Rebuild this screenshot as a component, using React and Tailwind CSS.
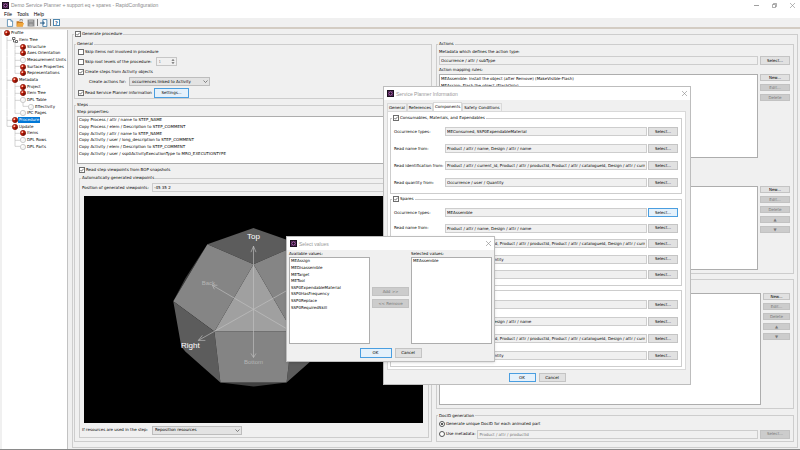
import React, { useState } from 'react';
import clsx from 'clsx';

const TREE = [
  { label: 'Profile', guides: '', on: true },
  { label: 'Item Tree', guides: '├', icon: 'tree' },
  { label: 'Structure', guides: '│├', on: true },
  { label: 'Axes Orientation', guides: '│├', on: true },
  { label: 'Measurement Units', guides: '│├' },
  { label: 'Surface Properties', guides: '│├', on: true },
  { label: 'Representations', guides: '│└', on: true },
  { label: 'Metadata', guides: '├', on: true },
  { label: 'Project', guides: '│├', on: true },
  { label: 'Item Tree', guides: '│├', on: true },
  { label: 'DPL Table', guides: '│├' },
  { label: 'Effectivity', guides: '││└' },
  { label: 'IPC Pages', guides: '│└' },
  { label: 'Procedure', guides: '├', on: true },
  { label: 'Update', guides: '└', on: true },
  { label: 'Items', guides: ' ├', on: true },
  { label: 'DPL Rows', guides: ' ├' },
  { label: 'DPL Parts', guides: ' └' },
];

const STEP_PROPERTIES = [
  'Copy Process / attr / name to STEP_NAME',
  'Copy Process / elem / Description to STEP_COMMENT',
  'Copy Activity / attr / name to STEP_NAME',
  'Copy Activity / user / long_description to STEP_COMMENT',
  'Copy Activity / elem / Description to STEP_COMMENT',
  'Copy Activity / user / ssp0ActivityExecutionType to MRO_EXECUTIONTYPE',
];

const NAME_SOURCE = 'Product / attr / name, Design / attr / name';
const ID_SOURCE =
  'Product / attr / current_id, Product / attr / productId, Product / attr / catalogueId, Design / attr / current_id';
const QUANTITY_SOURCE = 'Occurrence / user / Quantity';

const CONSUMABLES = [
  ['Occurrence types:', 'MEConsumed, SSP0ExpendableMaterial'],
  ['Read name from:', NAME_SOURCE],
  ['Read identification from:', ID_SOURCE],
  ['Read quantity from:', QUANTITY_SOURCE],
];

const SPARES = [
  ['Occurrence types:', 'MEAssemble'],
  ['Read name from:', NAME_SOURCE],
  ['', ID_SOURCE],
  ['', QUANTITY_SOURCE],
  ['', ''],
];

const SUPPORT = [
  ['', ''],
  ['', NAME_SOURCE],
  ['', ID_SOURCE],
  ['', QUANTITY_SOURCE],
];

const AVAILABLE = [
  'MEAssign',
  'MEDisassemble',
  'METarget',
  'METool',
  'SSP0ExpendableMaterial',
  'SSP0HasFrequency',
  'SSP0Replace',
  'SSP0RequiredSkill',
];

const AppIcon = () => (
  <svg viewBox="0 0 12 12" className="size-[7px] shrink-0">
    <rect width="12" height="12" fill="#1d1020" />
    <circle cx="6" cy="6" r="3" fill="none" stroke="#c56bc9" strokeWidth="1.6" />
    <path d="M2.5 2.5l1.4 1.4M9.5 2.5L8.1 3.9M2.5 9.5l1.4-1.4M9.5 9.5L8.1 8.1" stroke="#c56bc9" />
  </svg>
);

const Ball = ({ on }) => (
  <svg viewBox="0 0 12 12" className="size-[6px] shrink-0">
    <circle cx="6" cy="6" r="5.3" fill={on ? '#c8200c' : '#f4f4f4'} stroke={on ? '#6b1208' : '#a5a5a5'} />
    {on && <path d="M6 6L11 5A5 5 0 0 1 5 11z" fill="#7d1408" />}
    <circle cx="4.6" cy="4.4" r="1.8" fill={on ? '#ffc9b8' : '#fff'} />
  </svg>
);

const TreeIcon = () => (
  <svg viewBox="0 0 12 12" className="size-[6px] shrink-0" fill="none" stroke="#333" strokeWidth="1.4">
    <path d="M1 1h5v4H1zM3 5v5h4M7 7h4v4H7z" />
  </svg>
);

const Guide = ({ mark }) => (
  <svg viewBox="0 0 8 7" preserveAspectRatio="none" className="h-full w-2 shrink-0" stroke="#b5b5b5" strokeWidth="0.6">
    {mark !== ' ' && <path d={mark === '└' ? 'M3 0V3.5' : 'M3 0V7'} />}
    {(mark === '├' || mark === '└') && <path d="M3 3.5H8" />}
  </svg>
);

const Button = ({ children, className, primary, ...rest }) => (
  <button
    type="button"
    className={clsx(
      'flex shrink-0 items-center justify-center border whitespace-nowrap',
      primary ? 'border-[#4a9ee0] bg-[#e5f1fb]' : 'border-[#c4c4c4] bg-[#e1e1e1]',
      'disabled:border-[#c2c2c2] disabled:bg-[#cccccc] disabled:text-[#777]',
      className
    )}
    {...rest}
  >
    {children}
  </button>
);

const Check = ({ children, defaultChecked }) => (
  <label className="flex items-center gap-px whitespace-nowrap">
    <span className="grid size-[6px] shrink-0">
      <input
        type="checkbox"
        defaultChecked={defaultChecked}
        className="peer col-start-1 row-start-1 size-[6px] appearance-none border border-[#6e6e6e] bg-white"
      />
      <svg
        viewBox="0 0 12 12"
        className="pointer-events-none invisible col-start-1 row-start-1 size-[6px] peer-checked:visible"
        fill="none"
        stroke="#333"
        strokeWidth="1.3"
      >
        <path d="M3 6l2 2.4L9.4 3.4" />
      </svg>
    </span>
    {children}
  </label>
);

const Radio = ({ children, ...rest }) => (
  <label className="flex shrink-0 items-center gap-px whitespace-nowrap">
    <span className="grid size-[6px] shrink-0 place-items-center">
      <input
        type="radio"
        className="peer col-start-1 row-start-1 size-[6px] appearance-none rounded-full border border-[#555] bg-white"
        {...rest}
      />
      <span className="pointer-events-none invisible col-start-1 row-start-1 size-[2px] rounded-full bg-[#222] peer-checked:visible" />
    </span>
    {children}
  </label>
);

const Group = ({ title, className, children }) => (
  <fieldset className={clsx('min-w-0 border border-[#cdcdcd]', className)}>
    {title && <legend className="ml-px h-[6px] px-px leading-[6px]">{title}</legend>}
    {children}
  </fieldset>
);

const Field = ({ className, ...rest }) => (
  <input
    type="text"
    className={clsx('h-[9px] min-w-0 flex-1 border border-[#cdcdcd] bg-[#f0f0f0] px-px outline-none', className)}
    {...rest}
  />
);

const Dropdown = ({ label, value, className }) => (
  <span className={clsx('grid', className)}>
    <select
      aria-label={label}
      className="col-start-1 row-start-1 h-[9px] w-full appearance-none border border-[#bdbdbd] bg-[#e3e3e3] px-[2px]"
    >
      <option>{value}</option>
    </select>
    <svg
      viewBox="0 0 10 10"
      className="pointer-events-none col-start-1 row-start-1 mr-[2px] size-[5px] self-center justify-self-end"
      fill="none"
      stroke="#555"
      strokeWidth="1.4"
    >
      <path d="M1 3l4 4 4-4" />
    </svg>
  </span>
);

const SideButtons = ({ arrows, className }) => (
  <div className={clsx('flex shrink-0 flex-col gap-[3px]', className)}>
    <Button className="h-[7px]">New...</Button>
    <Button className="h-[7px]" disabled>Edit...</Button>
    <Button className="h-[7px]" disabled>Delete</Button>
    {arrows && (
      <>
        <Button className="h-[7px]" disabled aria-label="Move up">▲</Button>
        <Button className="h-[7px]" disabled aria-label="Move down">▼</Button>
      </>
    )}
  </div>
);

const CloseButton = () => (
  <button type="button" aria-label="Close" className="ml-auto">
    <svg viewBox="0 0 10 10" className="size-[5px]" stroke="#888" strokeWidth="1.2">
      <path d="M0 0l10 10M10 0L0 10" />
    </svg>
  </button>
);

const TitleBar = () => (
  <header className="flex h-[9px] shrink-0 items-center gap-[2px] bg-white pt-px pl-[2px] font-['Liberation_Sans',sans-serif] text-[5px] text-[#8a8a8a]">
    <AppIcon />
    <h1>Demo Service Planner + support eq + spares - RapidConfiguration</h1>
    <div className="ml-auto flex items-center gap-[13px] pr-[5px]">
      <button type="button" aria-label="Minimize">
        <svg viewBox="0 0 10 10" className="size-[5px]" stroke="#777" strokeWidth="1.4"><path d="M0 5h10" /></svg>
      </button>
      <button type="button" aria-label="Restore">
        <svg viewBox="0 0 10 10" className="size-[5px]" fill="none" stroke="#777" strokeWidth="1.2">
          <path d="M1 3h6v6H1zM3 3V1h6v6H7" />
        </svg>
      </button>
      <CloseButton />
    </div>
  </header>
);

const Toolbar = () => (
  <div className="flex h-[11px] shrink-0 items-center border-b-2 border-[#d3ccc3] bg-[#f0f0f0] pl-[6px]">
    <button type="button" aria-label="New">
      <svg viewBox="0 0 14 14" className="size-[8px]">
        <path d="M2.5 1h6l3 3v9h-9z" fill="#fff" stroke="#2f6f9f" strokeWidth="1.2" />
        <path d="M8.5 1v3h3" fill="none" stroke="#2f6f9f" />
      </svg>
    </button>
    <button type="button" aria-label="Open" className="ml-[2px]">
      <svg viewBox="0 0 14 14" className="size-[8px]">
        <path d="M1 4h4l1 1h6v8H1z" fill="#c9791d" />
        <path d="M1 13l2-6h11l-2 6z" fill="#f0a63c" />
        <path d="M7 4V1h4v3" fill="none" stroke="#555" />
      </svg>
    </button>
    <button type="button" aria-label="Save" className="ml-[3px]" disabled>
      <svg viewBox="0 0 14 14" className="size-[8px]">
        <path d="M1 1h12v12H1z" fill="#8c8c8c" />
        <path d="M3.5 1.5h7v4h-7zM4 8.5h6v4H4z" fill="#acacac" />
      </svg>
    </button>
    <span className="mx-[2px] h-[7px] w-px bg-[#777]" />
    <button type="button" aria-label="Export">
      <svg viewBox="0 0 14 14" className="size-[8px]">
        <path d="M5 1h7v12H5z" fill="#fff" stroke="#2f6f9f" strokeWidth="1.4" />
        <path d="M0 7h7M5 4.5L8 7 5 9.5" fill="none" stroke="#17507d" strokeWidth="1.6" />
      </svg>
    </button>
    <span className="mx-[2px] h-[7px] w-px bg-[#777]" />
    <button type="button" aria-label="Help" className="flex size-[7px] items-center justify-center border border-[#4f86ad] bg-white text-[5px] font-bold text-[#1d5f95]">
      ?
    </button>
  </div>
);

const ProfileTree = () => {
  const [selected, setSelected] = useState(13);

  return (
    <nav className="w-[66px] shrink-0 overflow-hidden border-r border-[#c2c2c2] bg-white pl-[2px]">
      <ul className="grid h-[120px] auto-rows-fr">
        {TREE.map((node, idx) => (
          <li key={idx} className="flex min-h-0 items-center">
            {[...node.guides].map((mark, gidx) => (
              <Guide key={gidx} mark={mark} />
            ))}
            {node.icon === 'tree' ? <TreeIcon /> : <Ball on={node.on} />}
            <button
              type="button"
              onClick={() => setSelected(idx)}
              className={clsx('px-px whitespace-nowrap', selected === idx && 'bg-[#0078d7] text-white')}
            >
              {node.label}
            </button>
          </li>
        ))}
      </ul>
    </nav>
  );
};

const Viewpoints = () => (
  <svg viewBox="0 0 338 226" className="min-h-0 w-full flex-1 bg-black font-['Liberation_Sans',sans-serif]" role="img" aria-label="Viewpoints">
    <g transform="translate(-84 -196)">
      <path d="M207 244L185 278 173 301zM299 244L321 278 333 301z" fill="#3b3b3b" />
      <path d="M220 382L253 386 286 382z" fill="#404040" />
      <path d="M253 228L207 244 253 264 299 244z" fill="#5c5c5c" />
      <path d="M207 244L173 301 214 331 253 264zM299 244L333 301 292 331 253 264z" fill="#858585" />
      <path d="M173 301L214 331 220 382 185 351 181 346zM333 301L292 331 286 382 321 351 325 346z" fill="#5c5c5c" />
      <path d="M214 331H292L286 382H220z" fill="#848484" />
      <path d="M253 264L214 331H292z" fill="#a0a0a0" />
      <g fill="none" stroke="#c4c4c4" strokeWidth="0.6">
        <path d="M253 309V246M250.5 252L253 246 255.5 252" />
        <path d="M253 309V357M250.5 353L253 357 255.5 353" />
        <path d="M253 309L212 285M217 285L212 285 214 289" />
        <path d="M253 309L198 340M202 335L198 340 205 340" />
        <path d="M253 309L308 278M253 309L294 333" />
      </g>
      <g textAnchor="middle">
        <text x="253" y="239" fill="#fff" fontSize="8">Top</text>
        <text x="190" y="348" fill="#fff" fontSize="8">Right</text>
        <text x="208" y="285" fill="#b5b5b5" fontSize="6">Back</text>
        <text x="253" y="364" fill="#b5b5b5" fontSize="6">Bottom</text>
      </g>
    </g>
  </svg>
);

const GeneralGroup = () => (
  <Group title="General">
    <div className="mt-[2px] flex flex-col px-[3px]">
      <div className="flex h-[6px] items-center">
        <Check>Skip items not involved in procedure</Check>
      </div>
      <div className="mt-[2px] flex h-[9px] items-center gap-1">
        <Check>Skip root levels of the procedure:</Check>
        <span className="grid w-[21px]">
          <input
            type="number"
            aria-label="Root levels"
            defaultValue="1"
            disabled
            className="col-start-1 row-start-1 h-[9px] w-full border border-[#c6c6c6] pl-[2px] text-[#888]"
          />
          <svg
            viewBox="0 0 10 16"
            className="pointer-events-none col-start-1 row-start-1 mr-[2px] h-[7px] w-1 self-center justify-self-end"
            fill="#666"
          >
            <path d="M1 6l4-4 4 4zM1 10l4 4 4-4z" />
          </svg>
        </span>
      </div>
      <div className="mt-[2px] flex h-[8px] items-center">
        <Check defaultChecked>Create steps from Activity objects</Check>
      </div>
      <div className="mt-px flex items-center pl-[11px]">
        <span className="w-10 whitespace-nowrap">Create actions for:</span>
        <Dropdown label="Create actions for" value="occurrences linked to Activity" className="w-[81px]" />
      </div>
      <div className="mt-[2px] flex items-center">
        <div className="w-[76px]">
          <Check defaultChecked>Read Service Planner information</Check>
        </div>
        <Button primary className="h-[10px] w-[35px]">Settings...</Button>
      </div>
    </div>
  </Group>
);

const StepsGroup = () => (
  <Group title="Steps" className="flex-1 pb-[3px]">
    <div className="flex h-full min-h-0 flex-col px-[2px]">
      <p className="mt-px">Step properties:</p>
      <ul className="mt-px grid h-[48px] shrink-0 auto-rows-[minmax(0,1fr)] border border-[#adadad] bg-white px-px pb-[6px]">
        {STEP_PROPERTIES.map((text) => (
          <li key={text} className="flex items-center whitespace-nowrap">{text}</li>
        ))}
      </ul>
      <div className="mt-[3px] mb-[2px] flex pl-[2px]">
        <Check defaultChecked>Read step viewpoints from BOP snapshots</Check>
      </div>
      <Group title="Automatically generated viewpoints" className="ml-[2px] flex-1 pb-[2px]">
        <div className="flex h-full min-h-0 flex-col px-[2px] pt-[2px]">
          <label className="flex items-center">
            <span className="w-[70px] shrink-0 whitespace-nowrap">Position of generated viewpoints:</span>
            <Field defaultValue="-45 35 2" />
          </label>
          <div className="mt-1 mr-[3px] ml-[2px] flex min-h-0 flex-1">
            <Viewpoints />
          </div>
          <div className="mt-[3px] flex items-center">
            <span className="w-[70px] whitespace-nowrap">If resources are used in the step:</span>
            <Dropdown label="If resources are used in the step" value="Reposition resources" className="w-[90px]" />
          </div>
        </div>
      </Group>
    </div>
  </Group>
);

const ActionsColumn = () => (
  <div className="flex min-w-0 flex-1 flex-col">
    <Group title="Actions" className="pb-[3px]">
      <div className="pr-[3px] pl-[2px]">
        <p className="mt-[2px]">Metadata which defines the action type:</p>
        <div className="mt-px flex gap-[2px]">
          <Field aria-label="Action type metadata" defaultValue="Occurrence / attr / subType" />
          <Button className="h-[9px] w-[30px]">Select...</Button>
        </div>
        <p className="mt-[2px]">Action mapping rules:</p>
        <div className="mt-px flex gap-[2px]">
          <ul className="h-[84px] flex-1 border border-[#adadad] bg-white px-px leading-[7px]">
            <li>MEAssemble: Install the object (after Remove) (MakeVisible-Flash)</li>
            <li>MEAssign: Flash the object (FlashOnly)</li>
          </ul>
          <SideButtons className="w-[30px]" />
        </div>
        <div className="mt-7 flex gap-[2px]">
          <ul className="h-[84px] flex-1 border border-[#adadad] bg-white" />
          <SideButtons arrows className="w-[30px]" />
        </div>
      </div>
    </Group>
    <Group className="mt-[5px] flex-1 pr-[3px] pb-[3px] pl-[2px]">
      <div className="flex h-full gap-[2px] pt-[13px]">
        <ul className="flex-1 border border-[#adadad] bg-white" />
        <SideButtons arrows className="w-[27px]" />
      </div>
    </Group>
    <Group title="DocID generation" className="mt-1 pb-[2px]">
      <div className="pr-[3px] pl-[2px]">
        <div className="mt-[2px] flex h-[6px] items-center">
          <Radio name="docid" defaultChecked>Generate unique DocID for each animated part</Radio>
        </div>
        <div className="mt-[3px] flex items-center gap-[2px]">
          <Radio name="docid">Use metadata:</Radio>
          <Field aria-label="DocID metadata" disabled defaultValue="Product / attr / productId" className="text-[#777]" />
          <Button disabled className="h-[9px] w-[30px]">Select...</Button>
        </div>
      </div>
    </Group>
  </div>
);

const SourceRows = ({ rows, className, active }) => (
  <div className={clsx('flex flex-col justify-between px-[3px]', className)}>
    {rows.map(([label, value], idx) => (
      <div key={idx} className="flex gap-px">
        <label className="flex min-w-0 flex-1 items-center">
          <span className="w-[51px] shrink-0 whitespace-nowrap">{label}</span>
          <Field defaultValue={value} />
        </label>
        <Button primary={active === idx} className="h-[9px] w-[30px]">Select...</Button>
      </div>
    ))}
  </div>
);

const ServicePlannerDialog = () => (
  <div role="dialog" aria-label="Service Planner Information" className="absolute top-[86px] left-[383px] flex w-[308px] flex-col border border-[#bdbdbd] bg-[#f0f0f0]">
    <header className="flex h-[13px] items-center gap-[2px] bg-white px-[3px] font-['Liberation_Sans',sans-serif] text-[5px] text-[#999]">
      <AppIcon />
      <h2>Service Planner Information</h2>
      <CloseButton />
    </header>
    <div role="tablist" className="mt-[2px] flex items-end pl-[3px]">
      {['General', 'References', 'Components', 'Safety Conditions'].map((tab) => (
        <button
          key={tab}
          type="button"
          role="tab"
          aria-selected={tab === 'Components'}
          className={clsx(
            'border border-b-0 border-[#d9d9d9] px-px whitespace-nowrap',
            tab === 'Components' ? 'h-[9px] bg-white' : 'h-[8px]'
          )}
        >
          {tab}
        </button>
      ))}
    </div>
    <div className="mr-1 ml-[3px] flex flex-col border border-[#d9d9d9] bg-white pt-[3px] pr-[3px] pb-[2px] pl-[2px]">
      <Group title={<Check defaultChecked>Consumables, Materials, and Expendables</Check>}>
        <SourceRows rows={CONSUMABLES} className="mt-[6px] mb-[6px] h-[60px]" />
      </Group>
      <Group className="mt-[2px]" title={<Check defaultChecked>Spares</Check>}>
        <SourceRows rows={SPARES} active={0} className="mt-[6px] mb-[6px] h-[71px]" />
      </Group>
      <Group className="mt-1">
        <SourceRows rows={SUPPORT} className="mt-[9px] mb-[6px] h-[60px]" />
      </Group>
    </div>
    <footer className="flex justify-center gap-[3px] pt-[3px] pb-[2px]">
      <Button primary className="h-[9px] w-[27px]">OK</Button>
      <Button className="h-[9px] w-[27px]">Cancel</Button>
    </footer>
  </div>
);

const ValueList = ({ title, values }) => (
  <div className="flex flex-1 flex-col">
    <p>{title}</p>
    <div className="h-[87px] border border-[#adadad] bg-white px-px">
      <ul aria-label={title} className="grid h-[53px] grid-rows-8">
        {values.map((value) => (
          <li key={value} className="flex min-h-0 items-center">{value}</li>
        ))}
      </ul>
    </div>
  </div>
);

const SelectValuesDialog = () => (
  <div role="dialog" aria-label="Select values" className="absolute top-[236px] left-[286px] flex w-[209px] flex-col border border-[#bdbdbd] bg-[#f0f0f0] shadow-sm">
    <header className="flex h-[13px] items-center gap-[2px] bg-white px-[3px] font-['Liberation_Sans',sans-serif] text-[5px] text-[#999]">
      <AppIcon />
      <h2>Select values</h2>
      <CloseButton />
    </header>
    <div className="mt-px flex gap-[2px] px-[2px]">
      <ValueList title="Available values:" values={AVAILABLE} />
      <div className="flex w-[37px] flex-col justify-center gap-[3px]">
        <Button disabled className="h-[9px]">Add &gt;&gt;</Button>
        <Button disabled className="h-[9px]">&lt;&lt; Remove</Button>
      </div>
      <ValueList title="Selected values:" values={['MEAssemble']} />
    </div>
    <footer className="flex justify-center gap-[3px] pt-1 pb-[3px]">
      <Button primary className="h-[10px] w-8">OK</Button>
      <Button className="h-[10px] w-[27px]">Cancel</Button>
    </footer>
  </div>
);

export default function App() {
  return (
    <div className="relative flex h-screen flex-col overflow-hidden border-b border-[#8a8a8a] bg-[#f0f0f0] font-['DejaVu_Sans',sans-serif] text-[4px] leading-[6px] text-black">
      <TitleBar />
      <div className="flex h-[9px] shrink-0 items-center gap-[5px] bg-white pl-1 font-['Liberation_Sans',sans-serif] text-[5px]">
        {['File', 'Tools', 'Help'].map((item) => (
          <button key={item} type="button">{item}</button>
        ))}
      </div>
      <Toolbar />
      <div className="flex min-h-0 flex-1 pt-px pl-[2px]">
        <ProfileTree />
        <main className="flex min-w-0 flex-1 flex-col pt-px pr-[2px] pb-[2px] pl-1">
          <Group title={<Check defaultChecked>Generate procedure</Check>} className="flex-1 pb-[5px]">
            <div className="flex h-full min-h-0 gap-1 pt-1 pr-[3px] pl-px">
              <div className="flex min-w-0 flex-1 flex-col gap-[3px]">
                <GeneralGroup />
                <StepsGroup />
              </div>
              <ActionsColumn />
            </div>
          </Group>
        </main>
      </div>
      <ServicePlannerDialog />
      <SelectValuesDialog />
    </div>
  );
}
